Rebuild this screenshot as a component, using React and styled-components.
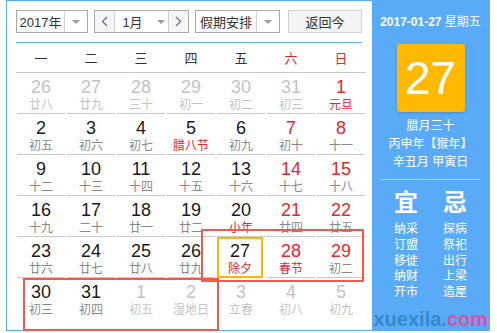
import React from 'react';
import styled, { createGlobalStyle } from 'styled-components';

const GlobalStyle = createGlobalStyle`
  body {
    margin: 0;
    background: #fff;
    font-family: "Liberation Sans", "Noto Sans CJK SC", sans-serif;
  }
`;

const BLUE = '#5aabf7';
const RED = '#e8262d';

const Widget = styled.div`
  position: relative;
  display: flex;
  width: 484px;
  height: 331px;
  margin-left: 6px;
  border: 1px solid ${BLUE};
  box-sizing: border-box;
`;

const Main = styled.div`
  flex: 1;
  padding: 9px 6px 0 9px;
`;

const Toolbar = styled.div`
  display: flex;
  height: 23px;
`;

const Select = styled.div`
  display: flex;
  width: ${(p) => p.$w}px;
  margin-right: ${(p) => p.$gap || 0}px;
  height: 23px;
  box-sizing: border-box;
  border: 1px solid #a9a9a9;
  background: #fff;
  font-size: 13px;
  color: #333;
`;

const SelectText = styled.div`
  flex: 1;
  display: flex;
  align-items: center;
  justify-content: center;
  gap: 14px;
  padding-left: ${(p) => p.$pl || 0}px;
`;

const Caret = styled.span`
  display: inline-block;
  width: 0;
  height: 0;
  border-left: 4px solid transparent;
  border-right: 4px solid transparent;
  border-top: 4px solid #9a9a9a;
`;

const CaretBox = styled.div`
  width: 22px;
  display: flex;
  align-items: center;
  justify-content: center;
  border-left: 1px solid #d6d6d6;
`;

const Step = styled.div`
  width: 19px;
  display: flex;
  align-items: center;
  justify-content: center;
  background: #f5f5f5;
  ${(p) => (p.$side === 'left' ? 'border-right' : 'border-left')}: 1px solid #d0d0d0;
`;

const TodayButton = styled.div`
  width: 74px;
  height: 23px;
  box-sizing: border-box;
  border: 1px solid #d0d0d0;
  background: #f4f4f4;
  display: flex;
  align-items: center;
  justify-content: center;
  font-size: 13px;
  color: #333;
`;

const BlueRule = styled.div`
  height: 1px;
  margin: 9px 4px 0 0;
  background: ${BLUE};
`;

const WeekHead = styled.div`
  display: grid;
  grid-template-columns: repeat(7, 50px);
  height: 29px;
  border-bottom: 1px solid #c8c8c8;
`;

const WeekDay = styled.div`
  display: flex;
  align-items: center;
  justify-content: center;
  font-size: 13px;
  color: ${(p) => (p.$red ? RED : '#333')};
`;

const Grid = styled.div`
  display: grid;
  grid-template-columns: repeat(7, 50px);
`;

const Cell = styled.div`
  margin: 0 1px;
  height: 41px;
  box-sizing: border-box;
  padding-top: ${(p) => (p.$sel ? 2 : 4)}px;
  display: flex;
  flex-direction: column;
  align-items: center;
  border-bottom: 1px solid ${(p) => (p.$last ? 'transparent' : '#c8c8c8')};
  ${(p) => p.$sel && `border: 2px solid #ffb400; margin-right: 3px;`}
`;

const DayNum = styled.div`
  font-size: 18px;
  line-height: 20px;
  color: ${(p) => p.$c};
`;

const Lunar = styled.div`
  font-size: 12px;
  line-height: 16px;
  color: ${(p) => p.$c};
  white-space: nowrap;
`;

const Side = styled.div`
  width: 118px;
  background: ${BLUE};
  color: #fff;
  display: flex;
  flex-direction: column;
  align-items: center;
  padding-top: 13px;
  box-sizing: border-box;
`;

const DateLine = styled.div`
  font-size: 12px;
  line-height: 16px;
  b {
    font-weight: bold;
  }
`;

const BigDay = styled.div`
  width: 68px;
  height: 68px;
  margin-top: 14px;
  border-radius: 3px;
  background: #ffb900;
  box-shadow: 0 1px 3px rgba(0, 0, 0, 0.18);
  display: flex;
  align-items: center;
  justify-content: center;
  font-size: 46px;
  color: #fff;
`;

const InfoLines = styled.div`
  margin-top: 5px;
  font-size: 12px;
  line-height: 18px;
  text-align: center;
`;

const Divider = styled.div`
  width: 99px;
  height: 1px;
  margin-top: 8px;
  background: rgba(255, 255, 255, 0.45);
`;

const Almanac = styled.div`
  display: flex;
  gap: 25px;
  margin-top: 8px;
`;

const AlmanacCol = styled.div`
  display: flex;
  flex-direction: column;
  align-items: center;
  font-size: 12px;
  line-height: 15.8px;
`;

const AlmanacHead = styled.div`
  font-size: 24px;
  line-height: 30px;
  font-weight: bold;
  margin-bottom: 4px;
`;

const Mark = styled.div`
  position: absolute;
  left: ${(p) => p.$x}px;
  top: ${(p) => p.$y}px;
  width: ${(p) => p.$w}px;
  height: ${(p) => p.$h}px;
  border: 2px solid #f2594b;
  box-sizing: border-box;
  pointer-events: none;
`;

const Watermark = styled.div`
  position: absolute;
  right: 1px;
  bottom: 0;
  font-size: 20px;
  line-height: 22px;
  font-weight: bold;
  color: rgba(40, 130, 190, 0.8);
  span {
    color: #d652a4;
  }
`;

const Chevron = ({ dir }) => (
  <svg width="7" height="11" viewBox="0 0 7 11">
    <path
      d={dir === 'left' ? 'M6 1 L1.5 5.5 L6 10' : 'M1 1 L5.5 5.5 L1 10'}
      fill="none"
      stroke="#5b6f8a"
      strokeWidth="1.2"
    />
  </svg>
);

const rows = [
  '26 廿八 o|27 廿九 o|28 三十 o|29 初一 o|30 初二 o|31 初三 o|1 元旦 f',
  '2 初五|3 初六|4 初七|5 腊八节 f|6 初九|7 初十|8 十一',
  '9 十二|10 十三|11 十四|12 十五|13 十六|14 十七|15 十八',
  '16 十九|17 二十|18 廿一|19 廿二|20 小年 f|21 廿四|22 廿五',
  '23 廿六|24 廿七|25 廿八|26 廿九|27 除夕 fs|28 春节 f|29 初二',
  '30 初三|31 初四|1 初五 o|2 湿地日 o|3 立春 o|4 初八 o|5 初九 o',
].map((r) =>
  r.split('|').map((c) => {
    const [d, l, flags = ''] = c.split(' ');
    return { d, l, out: flags.includes('o'), fest: flags.includes('f'), sel: flags.includes('s') };
  })
);

const weekdays = ['一', '二', '三', '四', '五', '六', '日'];

export default function App() {
  return (
    <>
      <GlobalStyle />
      <Widget>
        <Main>
          <Toolbar>
            <Select $w={72} $gap={6}>
              <SelectText>2017年</SelectText>
              <CaretBox>
                <Caret />
              </CaretBox>
            </Select>
            <Select $w={95} $gap={6}>
              <Step $side="left">
                <Chevron dir="left" />
              </Step>
              <SelectText $pl={4}>
                <span>1月</span>
                <Caret />
              </SelectText>
              <Step $side="right">
                <Chevron dir="right" />
              </Step>
            </Select>
            <Select $w={85} $gap={8}>
              <SelectText>假期安排</SelectText>
              <CaretBox>
                <Caret />
              </CaretBox>
            </Select>
            <TodayButton>返回今</TodayButton>
          </Toolbar>
          <BlueRule />
          <WeekHead>
            {weekdays.map((w, i) => (
              <WeekDay key={w} $red={i >= 5}>
                {w}
              </WeekDay>
            ))}
          </WeekHead>
          <Grid>
            {rows.map((row, ri) =>
              row.map((c, ci) => {
                const numColor = c.out ? '#c3c3c3' : ci >= 5 ? RED : '#1a1a1a';
                const lunarColor = c.out ? '#c3c3c3' : c.fest ? RED : '#888';
                return (
                  <Cell key={`${ri}-${ci}`} $last={ri === rows.length - 1} $sel={c.sel}>
                    <DayNum $c={numColor}>{c.d}</DayNum>
                    <Lunar $c={lunarColor}>{c.l}</Lunar>
                  </Cell>
                );
              })
            )}
          </Grid>
        </Main>
        <Side>
          <DateLine>
            <b>2017-01-27</b> 星期五
          </DateLine>
          <BigDay>27</BigDay>
          <InfoLines>
            腊月三十
            <br />
            丙申年【猴年】
            <br />
            辛丑月 甲寅日
          </InfoLines>
          <Divider />
          <Almanac>
            <AlmanacCol>
              <AlmanacHead>宜</AlmanacHead>
              <div>纳采</div>
              <div>订盟</div>
              <div>移徙</div>
              <div>纳财</div>
              <div>开市</div>
            </AlmanacCol>
            <AlmanacCol>
              <AlmanacHead>忌</AlmanacHead>
              <div>探病</div>
              <div>祭祀</div>
              <div>出行</div>
              <div>上梁</div>
              <div>造屋</div>
            </AlmanacCol>
          </Almanac>
        </Side>
        <Mark $x={194} $y={228} $w={163} $h={53} />
        <Mark $x={16} $y={277} $w={196} $h={53} />
        <Watermark>
          xuexila.<span>com</span>
        </Watermark>
      </Widget>
    </>
  );
}
